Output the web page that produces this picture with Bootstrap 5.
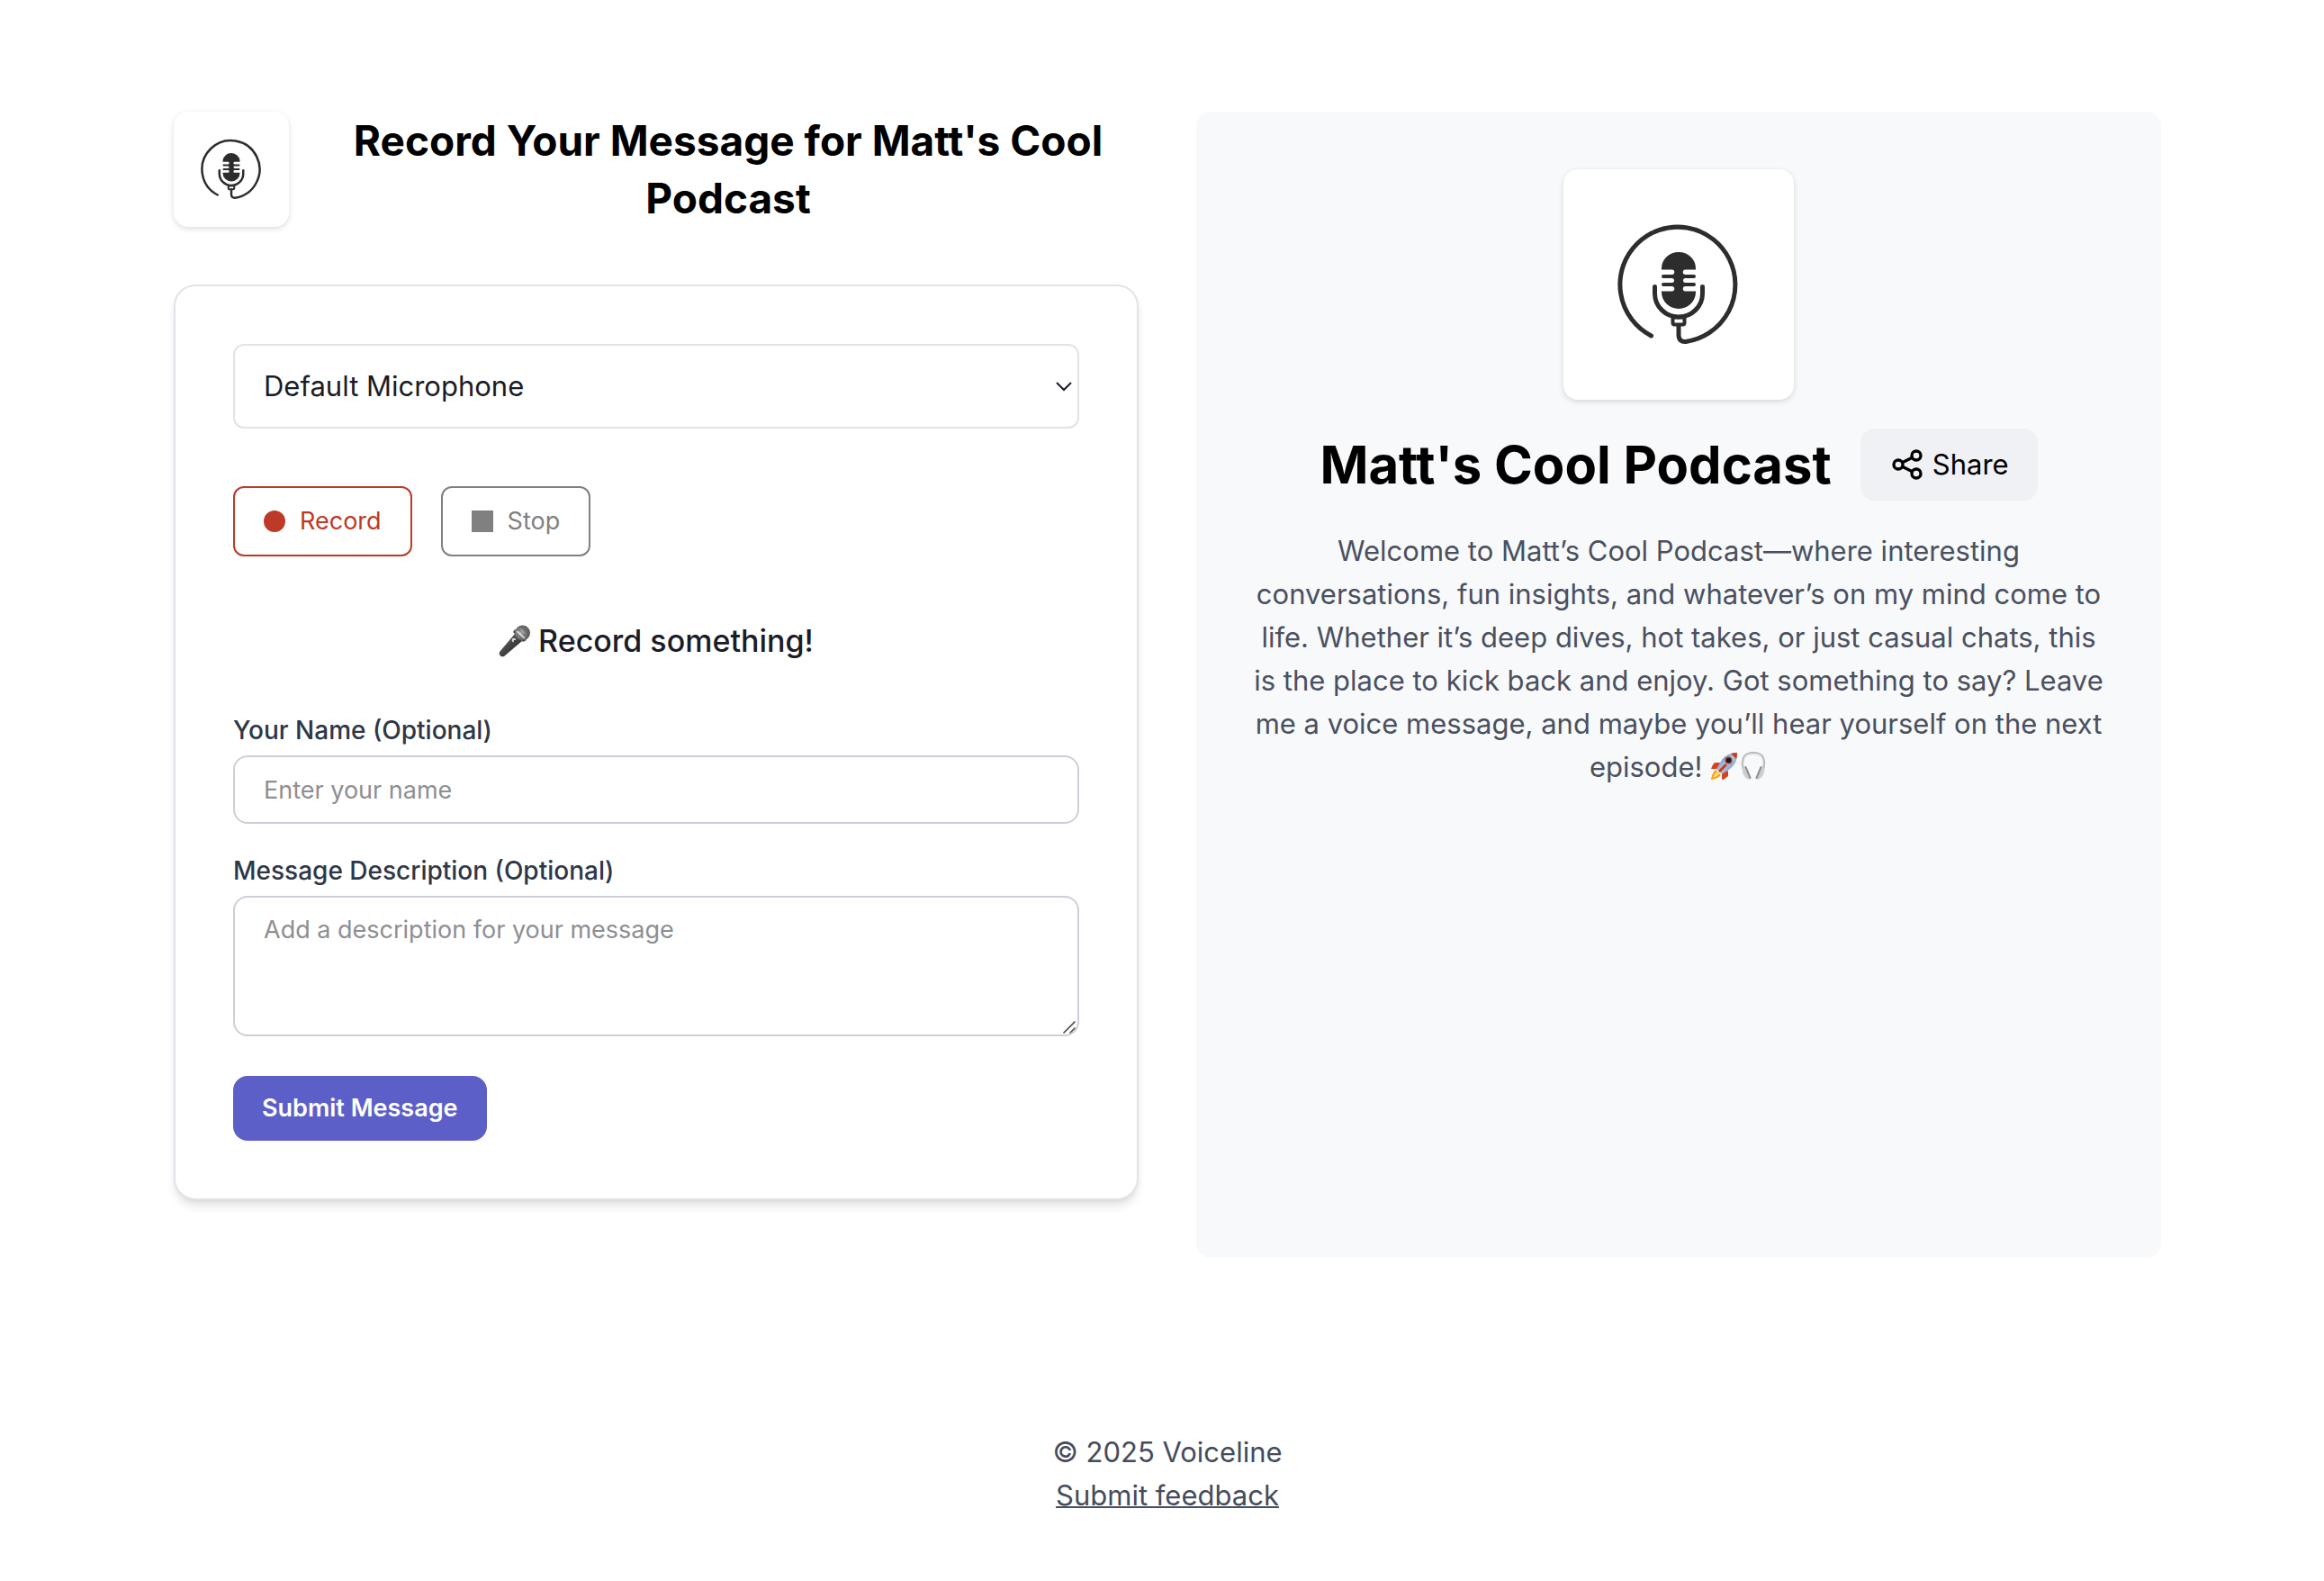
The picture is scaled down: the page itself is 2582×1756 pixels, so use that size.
<!DOCTYPE html>
<html lang="en">
<head>
<meta charset="utf-8">
<meta name="viewport" content="width=device-width, initial-scale=1">
<title>Matt's Cool Podcast</title>
<link rel="stylesheet" href="https://cdn.jsdelivr.net/npm/bootstrap@5.3.0/dist/css/bootstrap.min.css">
<style>
  body { font-family: Inter, "Liberation Sans", sans-serif; font-size: 31px; line-height: 48px; color: #1a1c27; background: #fff; }
  .page-shell { max-width: 2220px; padding: 124px 0 0 12px; }
  .split { gap: 64px; grid-template-columns: minmax(0, 1fr) minmax(0, 1fr); }
  .gap-wide { gap: 32px; }
  .head-row { margin-bottom: 64px; }
  .cover { background: #fff; border-radius: 16px; box-shadow: 0 2px 6px rgba(0,0,0,.14); flex: none; }
  .cover svg { display: block; width: 100%; height: 100%; }
  .cover-sm { width: 128px; height: 128px; }
  .cover-lg { width: 256px; height: 256px; margin-bottom: 32px; }
  .page-title { font-size: 46px; line-height: 64px; font-weight: 700; color: #000; }
  .record-card { border: 2px solid #e2e2ea; border-radius: 24px; padding: 64px; box-shadow: 0 8px 12px -2px rgba(0,0,0,.1), 0 4px 8px -4px rgba(0,0,0,.1); margin-bottom: 64px; background: #fff; }
  .mic-select { height: 94px; padding: 0 32px; font-size: 31px; color: #1a1c27; border: 2px solid #e2e2ea; border-radius: 12px; margin-bottom: 64px;
    background-image: url("data:image/svg+xml,%3Csvg xmlns='http://www.w3.org/2000/svg' viewBox='0 0 18 11'%3E%3Cpath d='M1 1l8 8 8-8' fill='none' stroke='%231a1c27' stroke-width='2'/%3E%3C/svg%3E"); background-size: 18px 11px; background-position: right 6px center; }
  .tool-btn { height: 78px; padding: 0 32px; gap: 16px; font-size: 27px; border: 2px solid currentColor; border-radius: 12px; background: #fff; }
  .tool-btn svg { width: 24px; height: 24px; }
  .tool-record { color: #bd3928; }
  .tool-stop { color: #808080; }
  .prompt-line { font-size: 34px; line-height: 56px; font-weight: 500; margin: 66px 0 51px; gap: 8px; }
  .prompt-line svg { width: 36px; height: 36px; }
  .field-label { font-size: 28px; line-height: 40px; font-weight: 500; color: #2d3748; margin-bottom: 8px; }
  .field-box { font-size: 27px; line-height: 40px; padding: 16px 32px; border: 2px solid #cbd0d8; border-radius: 16px; height: 76px; }
  .field-box::placeholder { color: #8e8e93; }
  .field-area { height: 156px; resize: none;
    background: #fff url("data:image/svg+xml,%3Csvg xmlns='http://www.w3.org/2000/svg' viewBox='0 0 14 14'%3E%3Cpath d='M.5 13.5l13-13M7.500 13.500l6-6' fill='none' stroke='%23555' stroke-width='1.700'/%3E%3C/svg%3E") no-repeat right 2px bottom 1px / 14px 14px; }
  .submit-btn { height: 72px; padding: 0 32px; font-size: 27px; font-weight: 600; color: #fff; background: #5d5fc8; border: 0; border-radius: 16px; margin-top: 44px; }
  .show-panel { background: #f8f9fb; border-radius: 16px; padding: 64px; }
  .show-title { font-size: 58px; line-height: 80px; font-weight: 700; color: #000; }
  .share-btn { height: 80px; padding: 0 32px; gap: 8px; font-size: 31px; color: #000; background: #f0f1f5; border: 0; border-radius: 16px; }
  .share-btn svg { width: 40px; height: 40px; }
  .show-text { color: #4a5060; margin: 32px 0 0; }
  .show-text svg { width: 32px; height: 32px; vertical-align: -4px; }
  .foot { color: #454c5c; margin-top: 192px; }
  .foot a { color: inherit; text-decoration-thickness: 2px; }
</style>
</head>
<body>
<svg width="0" height="0" class="position-absolute" aria-hidden="true">
  <symbol id="cover-art" viewBox="0 0 256 256">
    <g fill="none" stroke="#2d2d2d" stroke-width="5" stroke-linecap="round" stroke-linejoin="round">
      <path d="M97.500 185A64 64 0 1 1 136 191.500Q128 192 128 184V174"/>
      <path d="M101.500 130.500V138a26.500 26 0 0 0 53 0V130.500"/>
      <path d="M121.500 164.500h13v6q0 2-2 2h-9q-2 0-2-2z" stroke-width="4"/>
    </g>
    <path fill="#2d2d2d" d="M109 111v-1a19 18 0 0 1 38 0v1.500H135.500a2.500 2.500 0 0 0 0 5.500H145a2 2 0 0 1 0 4H135.500a2.500 2.500 0 0 0 0 5H145a2 2 0 0 1 0 4H135.500a2.500 2.500 0 0 0 0 5.500H147v1a19 18.500 0 0 1-38 0v-1H120.500a2.500 2.500 0 0 0 0-5.500H111a2 2 0 0 1 0-4H120.500a2.500 2.500 0 0 0 0-5H111a2 2 0 0 1 0-4H120.500a2.500 2.500 0 0 0 0-5.500H109z"/>
  </symbol>
  <linearGradient id="mic-body" x1="0" y1="0" x2="1" y2="1"><stop offset="0" stop-color="#777"/><stop offset=".5" stop-color="#444"/><stop offset="1" stop-color="#1c1c1c"/></linearGradient>
  <radialGradient id="mic-head" cx=".4" cy=".5"><stop offset="0" stop-color="#c4c4c4"/><stop offset=".5" stop-color="#858585"/><stop offset="1" stop-color="#5c5f5e"/></radialGradient>
  <linearGradient id="hull" x1="0" y1="0" x2="1" y2="1"><stop offset="0" stop-color="#35629c"/><stop offset=".5" stop-color="#b5cbe2"/><stop offset="1" stop-color="#4a6f9f"/></linearGradient>
</svg>
<div class="container-fluid page-shell">
  <main class="d-grid split">
    <section>
      <header class="d-flex align-items-center gap-wide head-row">
        <div class="cover cover-sm"><svg aria-hidden="true"><use href="#cover-art"/></svg></div>
        <h1 class="page-title text-center flex-grow-1 mb-0">Record Your Message for Matt's Cool Podcast</h1>
      </header>
      <form class="record-card">
        <select class="form-select mic-select" aria-label="Microphone"><option>Default Microphone</option></select>
        <div class="d-flex gap-wide">
          <button type="button" class="btn tool-btn tool-record d-flex align-items-center"><svg viewBox="0 0 24 24" aria-hidden="true"><circle cx="12" cy="12" r="12" fill="currentColor"/></svg>Record</button>
          <button type="button" class="btn tool-btn tool-stop d-flex align-items-center"><svg viewBox="0 0 24 24" aria-hidden="true"><path d="M0 0h24v24H0z" fill="currentColor"/></svg>Stop</button>
        </div>
        <p class="prompt-line d-flex justify-content-center align-items-center">
          <svg viewBox="0 0 36 36" role="img" aria-label="microphone">
            <path d="M18 10L1 30q-1 2 .5 4t4.500 1L26 18z" fill="url(#mic-body)"/>
            <path d="M18 5l13 12-4 2-11-11z" fill="#4a4a4a"/>
            <circle cx="26.500" cy="9" r="8.500" fill="url(#mic-head)"/>
            <path d="M20 7l9 8" stroke="#e0e0e0" stroke-width="1.500"/>
            <path d="M21 4l9 9M25 2l8 8M20 10l6 6" stroke="#555" stroke-width=".6"/>
            <circle cx="17" cy="17" r="2.300" fill="#ddd"/><circle cx="18" cy="18" r="1.300" fill="#333"/>
          </svg>
          <span>Record something!</span>
        </p>
        <label class="d-block field-label" for="who">Your Name (Optional)</label>
        <input id="who" type="text" class="form-control field-box" placeholder="Enter your name">
        <label class="d-block field-label mt-4 pt-2" for="what">Message Description (Optional)</label>
        <textarea id="what" class="form-control field-box field-area" placeholder="Add a description for your message"></textarea>
        <button type="submit" class="btn submit-btn d-block">Submit Message</button>
      </form>
    </section>
    <aside class="show-panel d-flex flex-column align-items-center text-center">
      <div class="cover cover-lg"><svg aria-hidden="true"><use href="#cover-art"/></svg></div>
      <div class="d-flex align-items-center gap-wide">
        <h2 class="show-title mb-0">Matt's Cool Podcast</h2>
        <button type="button" class="btn share-btn d-flex align-items-center"><svg viewBox="0 0 24 24" fill="none" stroke="currentColor" stroke-width="2" aria-hidden="true"><circle cx="18" cy="6" r="3"/><circle cx="6" cy="12" r="3"/><circle cx="18" cy="18" r="3"/><path d="M8.700 10.700l6.600-3.400M8.700 13.300l6.600 3.400"/></svg>Share</button>
      </div>
      <p class="show-text">Welcome to Matt’s Cool Podcast—where interesting conversations, fun insights, and whatever’s on my mind come to life. Whether it’s deep dives, hot takes, or just casual chats, this is the place to kick back and enjoy. Got something to say? Leave me a voice message, and maybe you’ll hear yourself on the next episode! <svg viewBox="0 0 32 32" role="img" aria-label="rocket">
          <path d="M11 12H5q-3 3-4 7h8zM20 21v6q-3 3-7 4v-8z" fill="#d8401f"/>
          <path d="M6 20q-4 4-5 11 7-1 11-5z" fill="#f59a1c"/><path d="M7 22q-3 3-4 7 4-1 7-4z" fill="#ffe25a"/>
          <path d="M30 1Q19 1 13 9L7 19l6 6 9-6Q31 12 30 1z" fill="url(#hull)"/>
          <path d="M30 1q-4 0-7 1l6 6q1-3 1-7z" fill="#c93a22"/>
          <path d="M10 22l8-8" stroke="#c93a22" stroke-width="3"/>
          <circle cx="20.500" cy="9.500" r="4" fill="#b13b2b"/><circle cx="20.500" cy="9.500" r="2.700" fill="#1b1c24"/>
        </svg><svg viewBox="0 0 32 32" role="img" aria-label="headphones">
          <path d="M5 21Q0 1 16 1t11 20" fill="none" stroke="#b9b9bb" stroke-width="2"/>
          <path d="M6 20Q2 3 16 3t10 17" fill="none" stroke="#e6e6e8" stroke-width="1"/>
          <path d="M4 19q2-4 4-2l5 12q-1 3-4 1-6-4-5-11zM28 19q-2-4-4-2l-5 12q1 3 4 1 6-4 5-11z" fill="#cfcfd2"/>
          <path d="M7.500 17l5 12M24.500 17l-5 12" stroke="#8f8f93" stroke-width="2" stroke-linecap="round"/>
        </svg></p>
    </aside>
  </main>
  <footer class="foot text-center">
    <div>© 2025 Voiceline</div>
    <a href="#">Submit feedback</a>
  </footer>
</div>
<script src="https://cdn.jsdelivr.net/npm/bootstrap@5.3.0/dist/js/bootstrap.bundle.min.js"></script>
</body>
</html>
